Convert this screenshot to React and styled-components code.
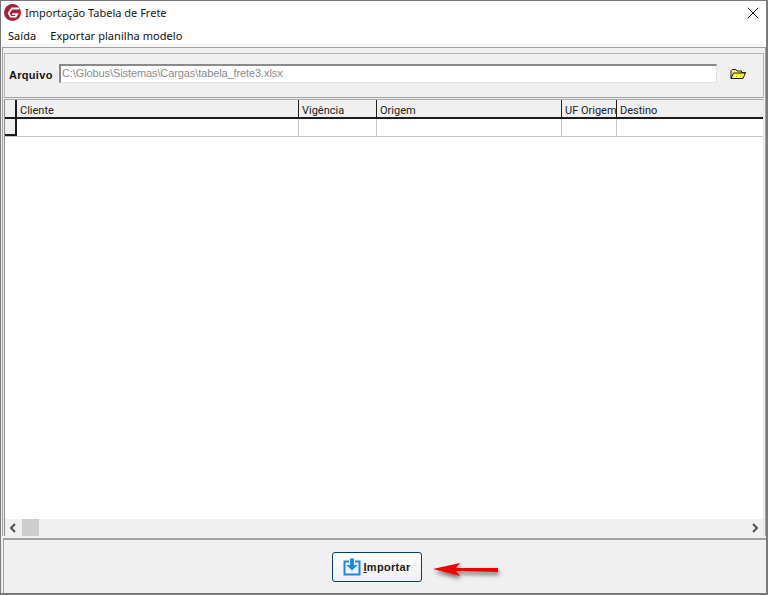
import React from "react";
import styled, { createGlobalStyle } from "styled-components";
import { X } from "lucide-react";

const Global = createGlobalStyle`
  html, body { margin: 0; padding: 0; background: #fff; }
  * { box-sizing: border-box; }
`;

const Win = styled.div`
  position: relative;
  width: 768px;
  height: 595px;
  display: flex;
  flex-direction: column;
  background: #fff;
  border: 1px solid #7a7a7a;
  border-right-width: 2px;
  border-bottom-width: 2px;
  font-family: "Noto Sans", sans-serif;
  color: #111;
  overflow: hidden;
`;

const TitleBar = styled.div`
  height: 24px;
  display: flex;
  align-items: center;
  padding: 0 3px 1px 3px;
  font-size: 11px;
  gap: 4px;
`;

const TitleText = styled.span`
  flex: 1;
  color: #1a1a1a;
`;

const MenuBar = styled.div`
  height: 19px;
  display: flex;
  gap: 14px;
  align-items: center;
  padding: 1px 0 0 7px;
  font-size: 11px;
  letter-spacing: 0.05px;
`;

const Body = styled.div`
  flex: 1;
  display: flex;
  flex-direction: column;
  background: #f0f0f0;
  padding: 0 0 0 1px;
  min-height: 0;
  border-top: 3px solid #f6f6f6;
`;

const Frame = styled.div`
  flex: 1;
  display: flex;
  flex-direction: column;
  min-height: 0;
  padding: 5px 1px 0;
  border: 1px solid #a0a0a0;
  border-bottom: 0;
`;

const FilePanel = styled.div`
  height: 45px;
  display: flex;
  align-items: center;
  padding: 0 0 4px 4px;
  background: #f0f0f0;
  border: 1px solid #b4b4b4;
  border-bottom-color: #a0a0a0;
`;

const FileLabel = styled.label`
  font-family: "Liberation Sans", sans-serif;
  font-size: 11px;
  font-weight: 700;
  letter-spacing: 0.3px;
  width: 50px;
  padding-top: 2px;
`;

const FileInput = styled.div`
  width: 658px;
  height: 19px;
  background: #fff;
  border: 1px solid #e4e4e4;
  border-top: 2px solid #8a8a8a;
  border-left: 2px solid #8a8a8a;
  font-family: "Liberation Sans", sans-serif;
  font-size: 11px;
  letter-spacing: -0.1px;
  color: #8c8c8c;
  line-height: 15px;
  padding-left: 1px;
  white-space: nowrap;
`;

const FolderSlot = styled.div`
  margin-left: 13px;
  display: flex;
  padding-top: 1px;
`;

const Grid = styled.div`
  flex: 1;
  display: flex;
  flex-direction: column;
  min-height: 0;
  margin-top: 1px;
  background: #fff;
  border-top: 1px solid #a8a8a8;
  border-left: 1px solid #8a8a8a;
  border-right: 1px solid #e8e8e8;
`;

const Rows = styled.div`
  flex: 1;
  min-height: 0;
  background: #fff;
`;

const Row = styled.div`
  display: grid;
  grid-template-columns: 12px 282px 78px 185px 55px 1fr;
  height: ${(p) => (p.$head ? "19px" : "18px")};
  background: ${(p) => (p.$head ? "#f0f0f0" : "#fff")};
  border-bottom: ${(p) => (p.$head ? "2px solid #1c1c1c" : "1px solid #c6c6c6")};
`;

const Cell = styled.div`
  border-right: 1px solid ${(p) => (p.$head ? "#1c1c1c" : "#c6c6c6")};
  font-family: "Roboto", sans-serif;
  font-size: 11px;
  line-height: 22px;
  padding-left: 3px;
  color: #222;
  white-space: nowrap;
  overflow: hidden;
  &:last-child { border-right: 0; }
`;

const Indicator = styled.div`
  background: #f0f0f0;
  border-right: 2px solid #1c1c1c;
  border-bottom: ${(p) => (p.$body ? "2px solid #1c1c1c" : "0")};
`;

const ScrollBar = styled.div`
  height: 17px;
  flex: none;
  display: flex;
  align-items: center;
  background: #f0f0f0;
`;

const ScrollButton = styled.div`
  width: 17px;
  height: 17px;
  display: flex;
  align-items: center;
  justify-content: center;
`;

const ScrollThumb = styled.div`
  width: 17px;
  height: 17px;
  background: #cdcdcd;
`;

const ScrollTrack = styled.div`
  flex: 1;
`;

const Footer = styled.div`
  height: 55px;
  flex: none;
  margin: 2px 0 0 1px;
  display: flex;
  align-items: center;
  justify-content: center;
  padding-right: 16px;
  background: #f0f0f0;
  border-top: 2px solid #a0a0a0;
  border-left: 1px solid #a0a0a0;
`;

const ImportButton = styled.button`
  width: 90px;
  height: 30px;
  display: flex;
  align-items: center;
  justify-content: center;
  gap: 2px;
  padding: 0;
  border: 1px solid #0a3d6e;
  border-radius: 3px;
  background: linear-gradient(#fefefe, #f1efec);
  font-family: "Liberation Sans", sans-serif;
  font-size: 11px;
  font-weight: 700;
  letter-spacing: 0.3px;
  color: #1a1a1a;
`;

const Arrow = styled.svg`
  position: absolute;
  left: 428px;
  top: 554px;
`;

function Logo() {
  return (
    <svg width="17" height="17" viewBox="0 0 17 17">
      <circle cx="8.5" cy="8.5" r="8.5" fill="#a51f3d" />
      <path d="M16 3.6H7.4L3.6 9.2 6.2 13.6H12.4L14.6 9.2H8.6L7.6 11H11.4L10.8 12H7.2L5.6 9.2 8.2 5.4H15Z" fill="#fff" />
    </svg>
  );
}

function Folder() {
  return (
    <svg width="16" height="12" viewBox="0 0 16 12">
      <defs>
        <pattern id="folder-dither" width="2" height="2" patternUnits="userSpaceOnUse">
          <rect width="2" height="2" fill="#fbf7a0" />
          <rect width="1" height="1" fill="#e8d830" />
        </pattern>
      </defs>
      <path d="M1 10.5V2.5L2 1.5H6L7 3H11.5V4.5H15.5L13 10.5Z" fill="url(#folder-dither)" stroke="#1a1a1a" strokeLinejoin="round" />
      <path d="M1 10.5L3.5 5H15.5" fill="none" stroke="#1a1a1a" />
    </svg>
  );
}

function ImportIcon() {
  return (
    <svg width="18" height="18" viewBox="0 0 18 18">
      <path d="M6 3.5H1.5V16.5H16.5V3.5H12" fill="#e8f3fd" stroke="#1e8ae6" strokeWidth="2" />
      <path d="M7 0.5H11V7H14.5L9 12.5 3.5 7H7Z" fill="#1e8ae6" />
    </svg>
  );
}

function Chevron({ dir }) {
  const d = dir === "left" ? "M6 1L2 5 6 9" : "M3 1L7 5 3 9";
  return (
    <svg width="9" height="10" viewBox="0 0 9 10">
      <path d={d} fill="none" stroke="#505050" strokeWidth="2" />
    </svg>
  );
}

const columns = ["Cliente", "Vigência", "Origem", "UF Origem", "Destino"];

export default function App() {
  return (
    <>
      <Global />
      <Win>
        <TitleBar>
          <Logo />
          <TitleText>Importação Tabela de Frete</TitleText>
          <X size={20} strokeWidth={1.2} color="#111" />
        </TitleBar>
        <MenuBar>
          <span>Saída</span>
          <span>Exportar planilha modelo</span>
        </MenuBar>
        <Body>
          <Frame>
            <FilePanel>
              <FileLabel>Arquivo</FileLabel>
              <FileInput>C:\Globus\Sistemas\Cargas\tabela_frete3.xlsx</FileInput>
              <FolderSlot>
                <Folder />
              </FolderSlot>
            </FilePanel>
            <Grid>
              <Rows>
                <Row $head>
                  <Indicator />
                  {columns.map((c) => (
                    <Cell $head key={c}>{c}</Cell>
                  ))}
                </Row>
                <Row>
                  <Indicator $body />
                  {columns.map((c) => (
                    <Cell key={c} />
                  ))}
                </Row>
              </Rows>
              <ScrollBar>
                <ScrollButton>
                  <Chevron dir="left" />
                </ScrollButton>
                <ScrollThumb />
                <ScrollTrack />
                <ScrollButton>
                  <Chevron dir="right" />
                </ScrollButton>
              </ScrollBar>
            </Grid>
          </Frame>
          <Footer>
            <ImportButton>
              <ImportIcon />
              <span><u>I</u>mportar</span>
            </ImportButton>
          </Footer>
        </Body>
        <Arrow width="76" height="32" viewBox="0 0 76 32">
          <defs>
            <filter id="arrow-shadow" x="-20%" y="-50%" width="140%" height="200%">
              <feDropShadow dx="1" dy="3" stdDeviation="2" floodColor="#000" floodOpacity="0.55" />
            </filter>
          </defs>
          <path d="M4 14L31 8 27 13 69 13V17L27 16 31 21Z" fill="#f00000" filter="url(#arrow-shadow)" />
        </Arrow>
      </Win>
    </>
  );
}
